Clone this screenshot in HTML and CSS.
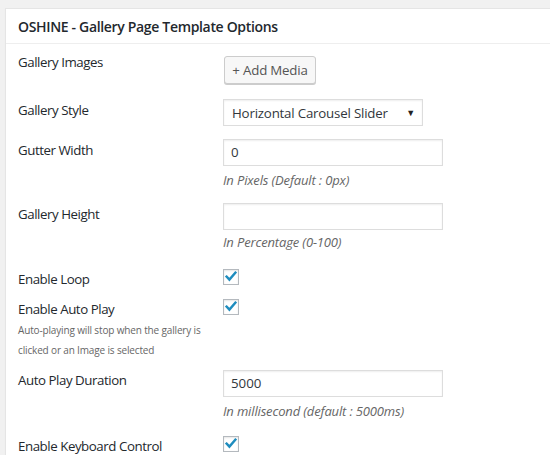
FILE: index.html
```html
<!DOCTYPE html>
<html>
<head>
<meta charset="utf-8">
<link rel="stylesheet" href="styles.css">
</head>
<body>
<div class="panel">
  <div class="panel-head"><h2 class="title">OSHINE - Gallery Page Template Options</h2></div>
  <div class="panel-body">
    <div class="row r1">
      <div class="label">Gallery Images</div>
      <div class="field"><button class="btn">+ Add Media</button></div>
    </div>
    <div class="row r2">
      <div class="label pad1">Gallery Style</div>
      <div class="field">
        <div class="select"><span>Horizontal Carousel Slider</span><span class="arrow">&#9660;</span></div>
      </div>
    </div>
    <div class="row r3">
      <div class="label pad1">Gutter Width</div>
      <div class="field">
        <div class="input">0</div>
        <div class="desc">In Pixels (Default : 0px)</div>
      </div>
    </div>
    <div class="row r4">
      <div class="label pad1">Gallery Height</div>
      <div class="field">
        <div class="input"></div>
        <div class="desc d2">In Percentage (0-100)</div>
      </div>
    </div>
    <div class="row r5">
      <div class="label">Enable Loop</div>
      <div class="field"><span class="check"><svg viewBox="0 0 16 16" width="16" height="16"><path d="M3.6 7.6 L6.4 10.6 L12.4 3.6" fill="none" stroke="#1e8cbe" stroke-width="2.4" stroke-linecap="square"/></svg></span></div>
    </div>
    <div class="row r6">
      <div class="label">Enable Auto Play
        <div class="note">Auto-playing will stop when the gallery is<br>clicked or an Image is selected</div>
      </div>
      <div class="field"><span class="check"><svg viewBox="0 0 16 16" width="16" height="16"><path d="M3.6 7.6 L6.4 10.6 L12.4 3.6" fill="none" stroke="#1e8cbe" stroke-width="2.4" stroke-linecap="square"/></svg></span></div>
    </div>
    <div class="row r7">
      <div class="label">Auto Play Duration</div>
      <div class="field">
        <div class="input">5000</div>
        <div class="desc">In millisecond (default : 5000ms)</div>
      </div>
    </div>
    <div class="row r8">
      <div class="label">Enable Keyboard Control</div>
      <div class="field"><span class="check"><svg viewBox="0 0 16 16" width="16" height="16"><path d="M3.6 7.6 L6.4 10.6 L12.4 3.6" fill="none" stroke="#1e8cbe" stroke-width="2.4" stroke-linecap="square"/></svg></span></div>
    </div>
  </div>
</div>
</body>
</html>
```
FILE: styles.css
```css
html, body {
  margin: 0;
  padding: 0;
  background: #f1f1f1;
  font-family: "Open Sans", "Noto Sans", sans-serif;
  color: #23282d;
  overflow: hidden;
}
.panel {
  margin: 8px 0 0 5px;
  background: #fff;
  border: 1px solid #e5e5e5;
  border-right: none;
  box-shadow: 0 1px 1px rgba(0,0,0,0.04);
  height: 460px;
}
.panel-head {
  height: 34px;
  border-bottom: 1px solid #eee;
  display: flex;
  align-items: center;
  padding-left: 12px;
}
.title {
  margin: 0;
  font-size: 14px;
  font-weight: 600;
  letter-spacing: -0.33px;
  color: #23282d;
}
.panel-body {
  padding: 8px 0 0 12px;
}
.row {
  display: flex;
  align-items: flex-start;
}
.label {
  width: 205px;
  flex: none;
  font-size: 13.3px;
  line-height: 20px;
  letter-spacing: -0.45px;
  color: #23282d;
}
.pad1 { padding-top: 1px; }
.field {
  flex: none;
  width: 230px;
}
.r2 { margin-top: 15px; }
.r3 { margin-top: 13px; }
.r4 { margin-top: 13px; }
.r5 { margin-top: 17px; }
.r6 { margin-top: 10px; }
.r7 { margin-top: 10px; }
.r8 { margin-top: 15px; }

.btn {
  margin: 4px 0 0 1px;
  height: 28px;
  width: 92px;
  padding: 0;
  background: #f7f7f7;
  border: 1px solid #ccc;
  border-radius: 3px;
  box-shadow: 0 1px 0 #ccc;
  font-family: inherit;
  font-size: 13.3px;
  letter-spacing: -0.2px;
  color: #555;
  line-height: 26px;
}
.select {
  box-sizing: border-box;
  width: 200px;
  height: 27px;
  border: 1px solid #ddd;
  box-shadow: inset 0 1px 2px rgba(0,0,0,0.07);
  display: flex;
  align-items: center;
  justify-content: space-between;
  padding: 0 7px 0 8px;
  font-size: 13.3px;
  letter-spacing: -0.2px;
  color: #32373c;
}
.arrow {
  font-size: 9px;
  color: #222;
}
.input {
  box-sizing: border-box;
  width: 220px;
  height: 27px;
  border: 1px solid #ddd;
  box-shadow: inset 0 1px 2px rgba(0,0,0,0.07);
  padding: 0 7px;
  font-size: 13.3px;
  line-height: 25px;
  color: #32373c;
}
.desc {
  margin-top: 4px;
  font-size: 13px;
  line-height: 20px;
  letter-spacing: -0.15px;
  font-style: italic;
  color: #666;
}
.d2 { margin-top: 2px; }
.check {
  display: block;
  box-sizing: border-box;
  width: 16px;
  height: 16px;
  border: 1px solid #b4b9be;
  box-shadow: inset 0 1px 2px rgba(0,0,0,0.1);
  position: relative;
}
.check svg {
  position: absolute;
  left: -1px;
  top: -1px;
}
.note {
  font-size: 10px;
  line-height: 20px;
  letter-spacing: -0.15px;
  color: #666;
  margin-top: 1px;
}
```
